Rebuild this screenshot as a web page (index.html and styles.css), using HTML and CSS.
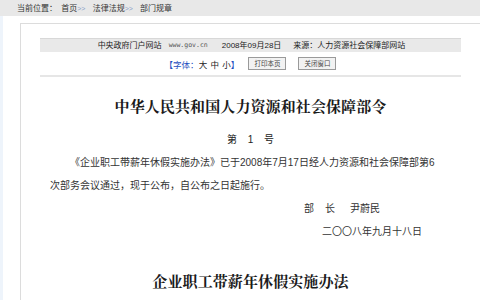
FILE: index.html
```html
<!DOCTYPE html>
<html lang="zh">
<head>
<meta charset="utf-8">
<title>部门规章</title>
<link rel="stylesheet" href="styles.css">
</head>
<body>
<div class="topbar">当前位置： <span class="crumb">首页</span><span class="arr">&gt;&gt;</span> <span class="crumb">法律法规</span><span class="arr">&gt;&gt;</span> <span class="crumb">部门规章</span></div>
<div class="main">
  <div class="page">
    <div class="infobar">
      <span class="site">中央政府门户网站</span>
      <span class="url">www.gov.cn</span>
      <span class="date">2008年09月28日</span>
      <span class="src">来源：人力资源社会保障部网站</span>
    </div>
    <div class="tools">
      <span class="fontsize"><span class="blue">【字体：</span>大 中 小<span class="blue">】</span></span>
      <span class="btn">打印本页</span>
      <span class="btn">关闭窗口</span>
    </div>
    <h1 class="title">中华人民共和国人力资源和社会保障部令</h1>
    <p class="num">第 1 号</p>
    <p class="para">《企业职工带薪年休假实施办法》已于2008年7月17日经人力资源和社会保障部第6次部务会议通过，现于公布，自公布之日起施行。</p>
    <p class="sig">部<span class="g1"></span>长<span class="g2"></span>尹蔚民</p>
    <p class="sigdate">二〇〇八年九月十八日</p>
    <h2 class="title title2">企业职工带薪年休假实施办法</h2>
  </div>
</div>
</body>
</html>
```
FILE: styles.css
```css
html, body {
  margin: 0;
  padding: 0;
  background: #fff;
  height: 100%;
  overflow: hidden;
}
body {
  font-family: "Liberation Sans", "Noto Sans CJK SC", sans-serif;
  color: #333;
}
.topbar {
  height: 16px;
  line-height: 17px;
  background: #e8e8e8;
  padding-left: 17px;
  font-size: 8px;
  color: #333;
}
.topbar .crumb { margin-left: 2px; }
.topbar .arr { color: #8aa2c8; font-size: 7px; margin-right: 3px; }
.main {
  border-left: 3px solid #eef4fb;
  padding-left: 17px;
  padding-top: 7px;
  height: 284px;
  box-sizing: border-box;
  overflow: hidden;
}
.page {
  border-top: 1px solid #dcdcdc;
  border-left: 1px solid #dcdcdc;
  padding: 0 19px;
  height: 100%;
}
.infobar {
  margin-top: 14px;
  border-top: 1px solid #d8d8d8;
  background: #e9e9e9;
  height: 13px;
  line-height: 13px;
  font-size: 8px;
  color: #222;
  display: flex;
  justify-content: center;
  padding-left: 2px;
}
.infobar .site { margin-right: 7px; }
.infobar .url { font-family: "DejaVu Sans Mono", "Liberation Mono", monospace; font-size: 6.5px; color: #555; margin-right: 14px; }
.infobar .date { margin-right: 12px; }
.tools {
  height: 23px;
  border-bottom: 2px solid #e6e6e6;
  display: flex;
  align-items: center;
  justify-content: center;
}
.fontsize {
  font-size: 8.5px;
  color: #222;
  word-spacing: 1px;
  margin-right: 9px;
}
.fontsize .blue { color: #1f4fc0; word-spacing: 0; }
.btn {
  width: 36px;
  height: 11px;
  line-height: 11px;
  border: 1px solid #9a9a9a;
  background: #f2f2f2;
  font-size: 6.5px;
  color: #444;
  text-align: center;
  margin-right: 12px;
}
.btn:last-child { margin-right: 0; }
.title {
  margin: 19px 0 0;
  font-family: "Noto Serif CJK SC", "Noto Sans CJK SC", serif;
  font-size: 15px;
  font-weight: bold;
  letter-spacing: 0.1px;
  line-height: 20px;
  text-align: center;
  color: #1a1a1a;
}
.num {
  margin: 16px 0 0;
  text-align: center;
  font-size: 10px;
  line-height: 16px;
  word-spacing: 8px;
  color: #222;
}
.para, .sig, .sigdate {
  font-size: 10px;
  line-height: 23px;
  color: #333;
}
.para {
  margin: 3px 20px 0 10px;
  text-indent: 20px;
}
.sig {
  margin: 0 0 0 264px;
}
.sig .g1 { display: inline-block; width: 11px; }
.sig .g2 { display: inline-block; width: 15px; }
.sigdate {
  margin: 0 0 0 282px;
}
.title2 {
  margin-top: 28px;
}
```
